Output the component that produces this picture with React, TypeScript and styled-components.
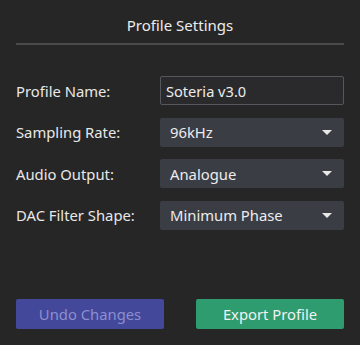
import React from "react";
import styled, { createGlobalStyle } from "styled-components";

const Global = createGlobalStyle`
  html, body { margin: 0; padding: 0; background: #262626; }
  body { font-family: "Noto Sans", "Open Sans", sans-serif; }
  * { box-sizing: border-box; }
`;

const Panel = styled.div`
  width: 360px;
  height: 345px;
  background: #262626;
  padding: 0 16px;
  display: flex;
  flex-direction: column;
  color: #e6e6e6;
`;

const Title = styled.h1`
  margin: 0;
  height: 43px;
  padding-top: 14px;
  font-size: 15px;
  font-weight: 400;
  text-align: center;
  line-height: 22px;
  color: #ececec;
`;

const Divider = styled.div`
  height: 2px;
  background: #4a4a4a;
`;

const Form = styled.div`
  display: flex;
  flex-direction: column;
  gap: 12.5px;
  margin-top: 31px;
`;

const Row = styled.div`
  display: grid;
  grid-template-columns: 144px 1fr;
  align-items: center;
  height: 29px;
`;

const Label = styled.span`
  font-size: 14.8px;
  color: #e8e8e8;
`;

const TextInput = styled.div`
  height: 29px;
  border: 1px solid #55575c;
  border-radius: 2px;
  background: #2a2a2c;
  padding: 0 5px;
  display: flex;
  align-items: center;
  font-size: 14.6px;
  color: #ececec;
`;

const Select = styled.div`
  height: 29px;
  border-radius: 2px;
  background: #3b3d45;
  padding: 0 10px;
  display: flex;
  align-items: center;
  justify-content: space-between;
  font-size: 14.8px;
  color: #ececec;
`;

const Arrow = styled.span`
  width: 0;
  height: 0;
  border-left: 5px solid transparent;
  border-right: 5px solid transparent;
  border-top: 5px solid #e8e8e8;
  margin-right: 2px;
`;

const Footer = styled.div`
  margin-top: auto;
  margin-bottom: 16px;
  display: flex;
  justify-content: space-between;
`;

const Button = styled.button<{ $variant: "undo" | "export" }>`
  width: 148px;
  height: 30px;
  border: none;
  border-radius: 2px;
  font-family: "Noto Sans", "Open Sans", sans-serif;
  font-size: 14.8px;
  background: ${(p) => (p.$variant === "undo" ? "#44489a" : "#2e9c6e")};
  color: ${(p) => (p.$variant === "undo" ? "#8b8fd0" : "#f2f2f2")};
`;

const rows = [
  { label: "Sampling Rate:", value: "96kHz" },
  { label: "Audio Output:", value: "Analogue" },
  { label: "DAC Filter Shape:", value: "Minimum Phase" },
];

export default function App() {
  return (
    <>
      <Global />
      <Panel>
        <Title>Profile Settings</Title>
        <Divider />
        <Form>
          <Row>
            <Label>Profile Name:</Label>
            <TextInput>Soteria v3.0</TextInput>
          </Row>
          {rows.map((r) => (
            <Row key={r.label}>
              <Label>{r.label}</Label>
              <Select>
                {r.value}
                <Arrow />
              </Select>
            </Row>
          ))}
        </Form>
        <Footer>
          <Button $variant="undo">Undo Changes</Button>
          <Button $variant="export">Export Profile</Button>
        </Footer>
      </Panel>
    </>
  );
}
